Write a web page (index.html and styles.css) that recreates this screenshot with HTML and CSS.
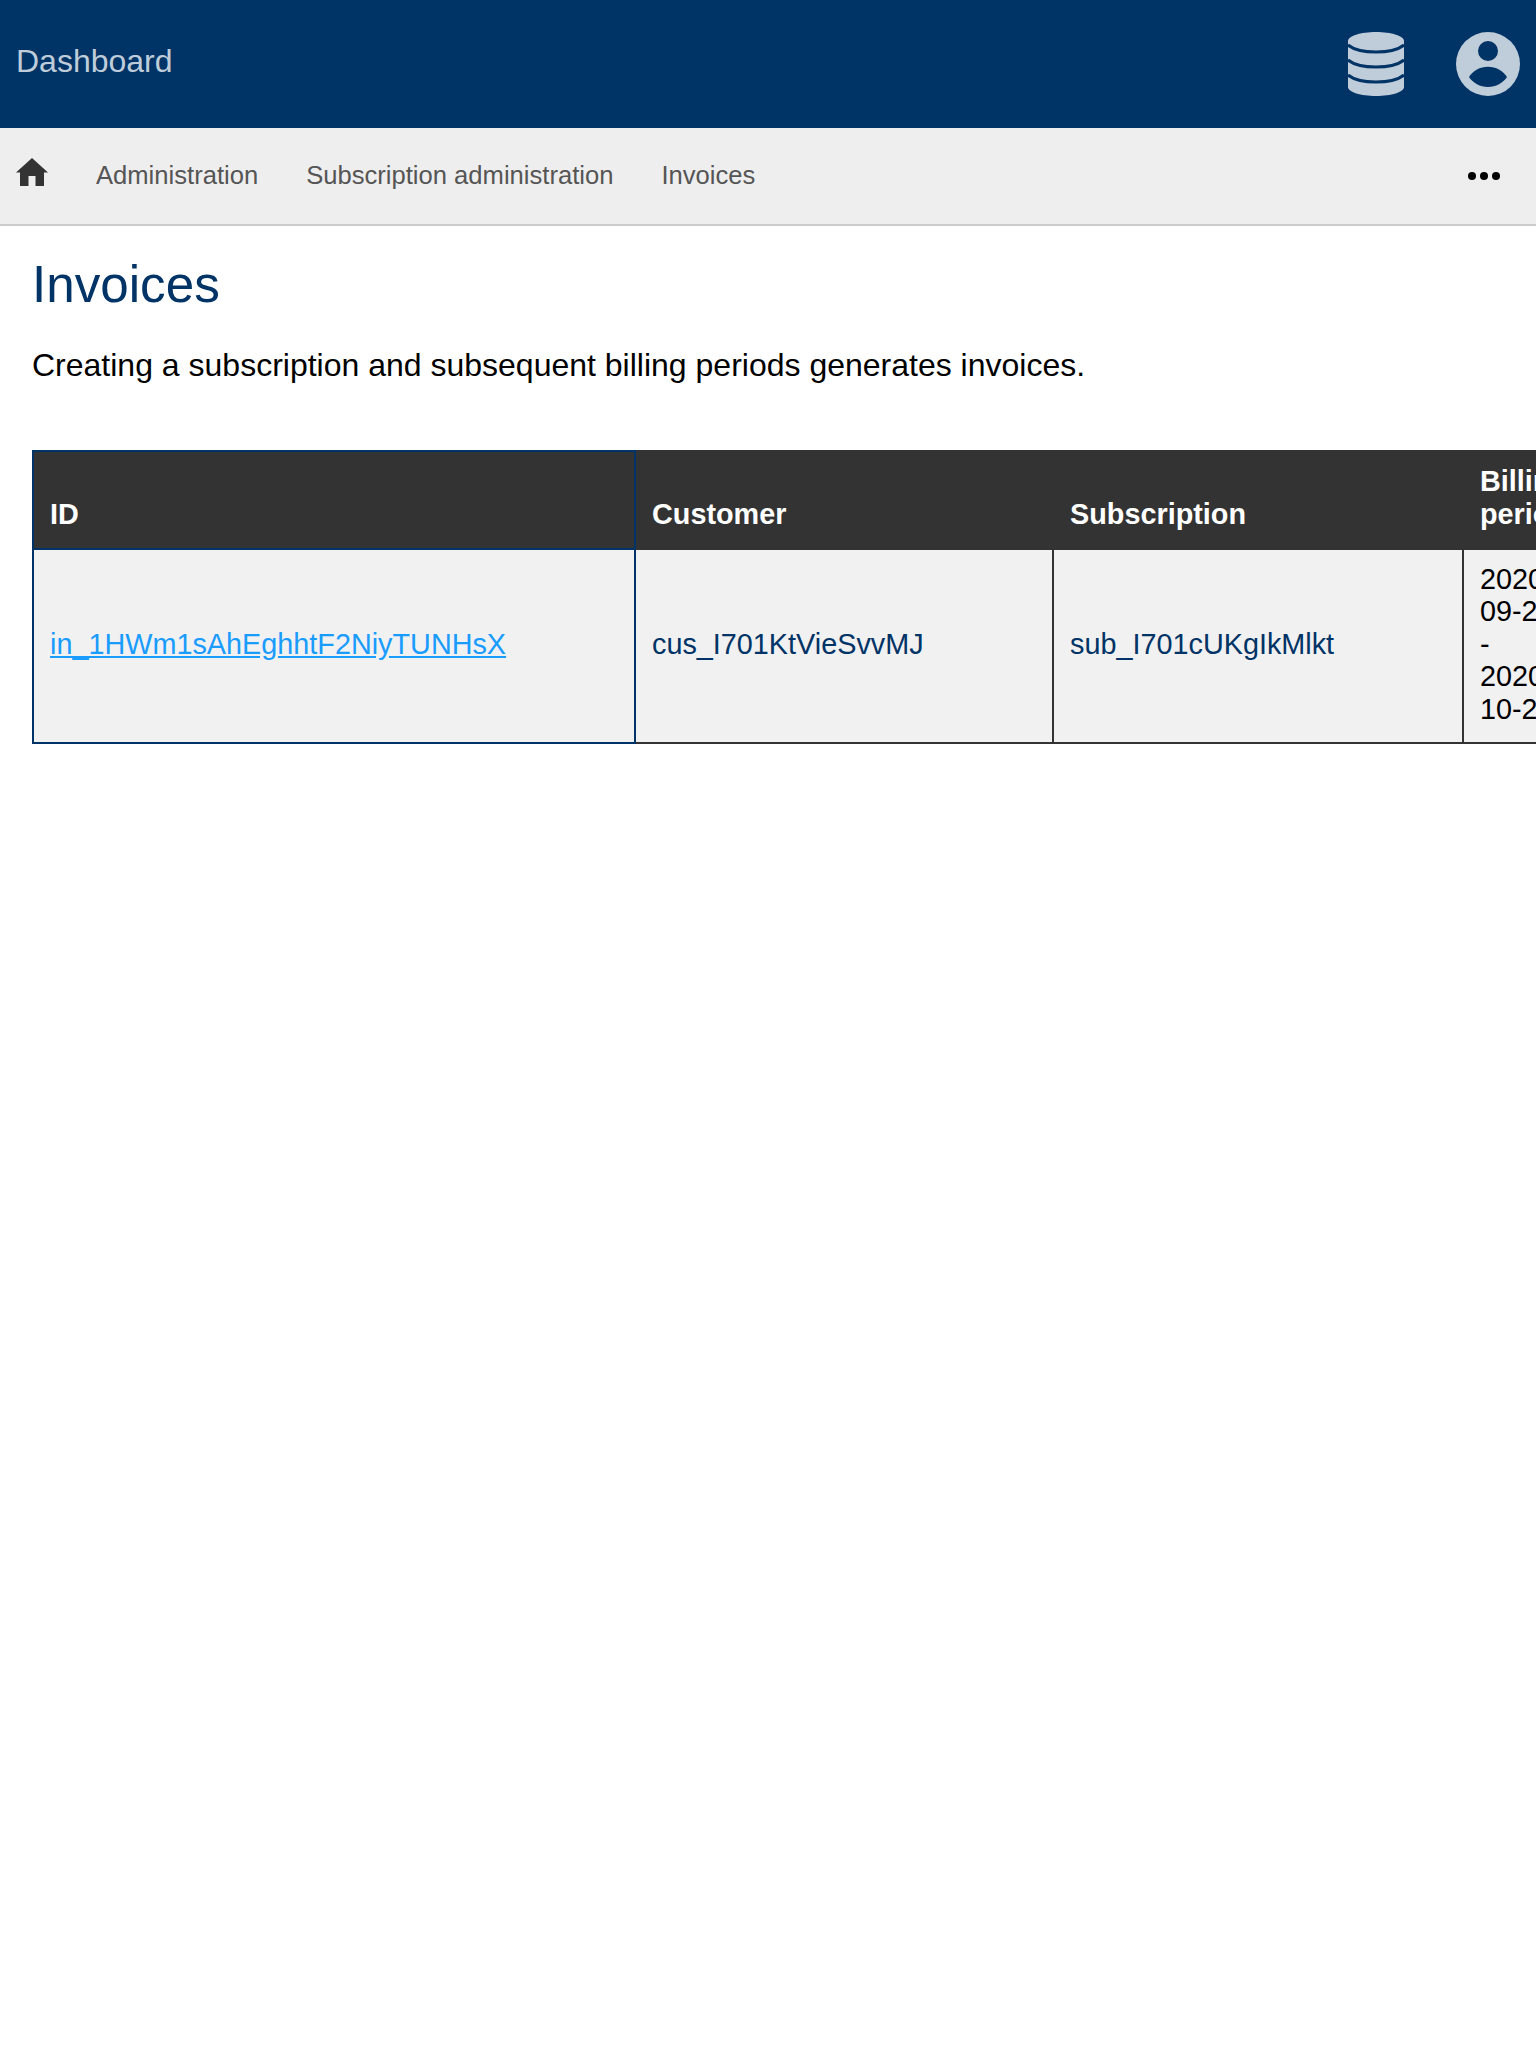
FILE: index.html
```html
<!DOCTYPE html>
<html lang="en">
<head>
    <meta charset="UTF-8">
    <meta name="viewport" content="width=device-width, initial-scale=1.0">
    <title>Invoices</title>
    <link rel="stylesheet" href="styles.css">
</head>
<body>
    <header class="topbar">
        <a class="brand" href="#">Dashboard</a>
        <div class="topbar-icons">
            <svg class="icon-db" viewBox="0 0 56 64">
                <path class="db-body" d="M0 9C0 4 12.5 0 28 0S56 4 56 9V55C56 60 43.5 64 28 64S0 60 0 55Z"/>
                <path class="db-gap" d="M0 13C6 18 17 20 28 20S50 18 56 13"/>
                <path class="db-gap" d="M0 28C6 33 17 35 28 35S50 33 56 28"/>
                <path class="db-gap" d="M0 43C6 48 17 50 28 50S50 48 56 43"/>
            </svg>
            <svg class="icon-user" viewBox="0 0 64 64">
                <path fill-rule="evenodd" d="M32 0A32 32 0 1 1 32 64A32 32 0 1 1 32 0ZM32 9A10 10 0 1 0 32 29A10 10 0 1 0 32 9ZM13 45C17 38.5 24 34.7 32 34.7S47 38.5 51 45C47 51 40 55 32 55S17 51 13 45Z"/>
            </svg>
        </div>
    </header>

    <nav class="menu">
        <a class="menu-home" href="#">
            <svg viewBox="0 0 32 28"><path d="M16 0L32 14.500H28V28H19.500V18H12.500V28H4V14.500H0Z"/></svg>
        </a>
        <a class="menu-link" href="#">Administration</a>
        <a class="menu-link" href="#">Subscription administration</a>
        <a class="menu-link" href="#">Invoices</a>
        <div class="menu-more"><span></span><span></span><span></span></div>
    </nav>

    <main class="content">
        <h1>Invoices</h1>
        <p class="intro">Creating a subscription and subsequent billing periods generates invoices.</p>

        <div class="table-wrap">
            <table class="invoices">
                <thead>
                    <tr>
                        <th class="col-id">ID</th>
                        <th class="col-customer">Customer</th>
                        <th class="col-sub">Subscription</th>
                        <th class="col-period">Billing period</th>
                    </tr>
                </thead>
                <tbody>
                    <tr>
                        <td class="col-id"><a href="#">in_1HWm1sAhEghhtF2NiyTUNHsX</a></td>
                        <td class="ref">cus_I701KtVieSvvMJ</td>
                        <td class="ref">sub_I701cUKgIkMlkt</td>
                        <td>2020-09-28 - 2020-10-28</td>
                    </tr>
                </tbody>
            </table>
        </div>
    </main>
</body>
</html>
```

FILE: styles.css
```css
body {
    font-family: "Liberation Sans", Arial, sans-serif;
    margin: 0;
    background: #fff;
    color: #000;
}
.topbar {
    height: 128px;
    background-color: #003366;
    display: flex;
    align-items: center;
    justify-content: space-between;
    padding: 0 16px;
}
.brand {
    font-size: 32px;
    color: #bfccd9;
    text-decoration: none;
    margin-bottom: 5px;
}
.topbar-icons {
    display: flex;
    align-items: center;
    gap: 52px;
}
.icon-db {
    width: 56px;
    height: 64px;
}
.icon-user {
    width: 64px;
    height: 64px;
    fill: #bfccd9;
}
.db-body {
    fill: #bfccd9;
}
.db-gap {
    fill: none;
    stroke: #003366;
    stroke-width: 3;
}
.menu {
    height: 96px;
    background-color: #eee;
    border-bottom: 2px solid #ccc;
    display: flex;
    align-items: center;
    padding-left: 16px;
    padding-right: 36px;
}
.menu-home {
    display: flex;
    margin-right: 24px;
    margin-top: -8px;
}
.menu-home svg {
    width: 32px;
    height: 28px;
    fill: #333;
}
.menu-link {
    font-size: 25.6px;
    color: #555;
    text-decoration: none;
    padding: 0 24px 2px;
}
.menu-more {
    margin-left: auto;
    display: flex;
    gap: 4px;
}
.menu-more span {
    width: 8px;
    height: 8px;
    border-radius: 50%;
    background: #000;
}
.content {
    padding-left: 32px;
}
h1 {
    font-size: 51.2px;
    font-weight: normal;
    color: #003366;
    margin: 0;
    padding-top: 29px;
    line-height: 59px;
}
.intro {
    font-size: 32px;
    margin: 33px 0 0;
    line-height: 37px;
}
.table-wrap {
    margin-top: 66px;
    overflow: hidden;
    padding-bottom: 2px;
}
.invoices {
    border-collapse: collapse;
    table-layout: fixed;
    width: 1546px;
    font-size: 28.8px;
}
.invoices th, .invoices td {
    border: 2px solid #333;
    padding: 13px 16px 17px;
    text-align: left;
}
.invoices th {
    background-color: #333;
    color: #fff;
    vertical-align: bottom;
}
.invoices td {
    background-color: #f1f1f1;
    line-height: 32.4px;
}
.invoices .col-id {
    border-color: #003366;
    width: 568px;
}
.col-customer {
    width: 384px;
}
.col-sub {
    width: 376px;
}
.col-period {
    width: 80px;
}
.invoices a {
    color: #1a9cff;
}
.ref {
    color: #003366;
}
```
